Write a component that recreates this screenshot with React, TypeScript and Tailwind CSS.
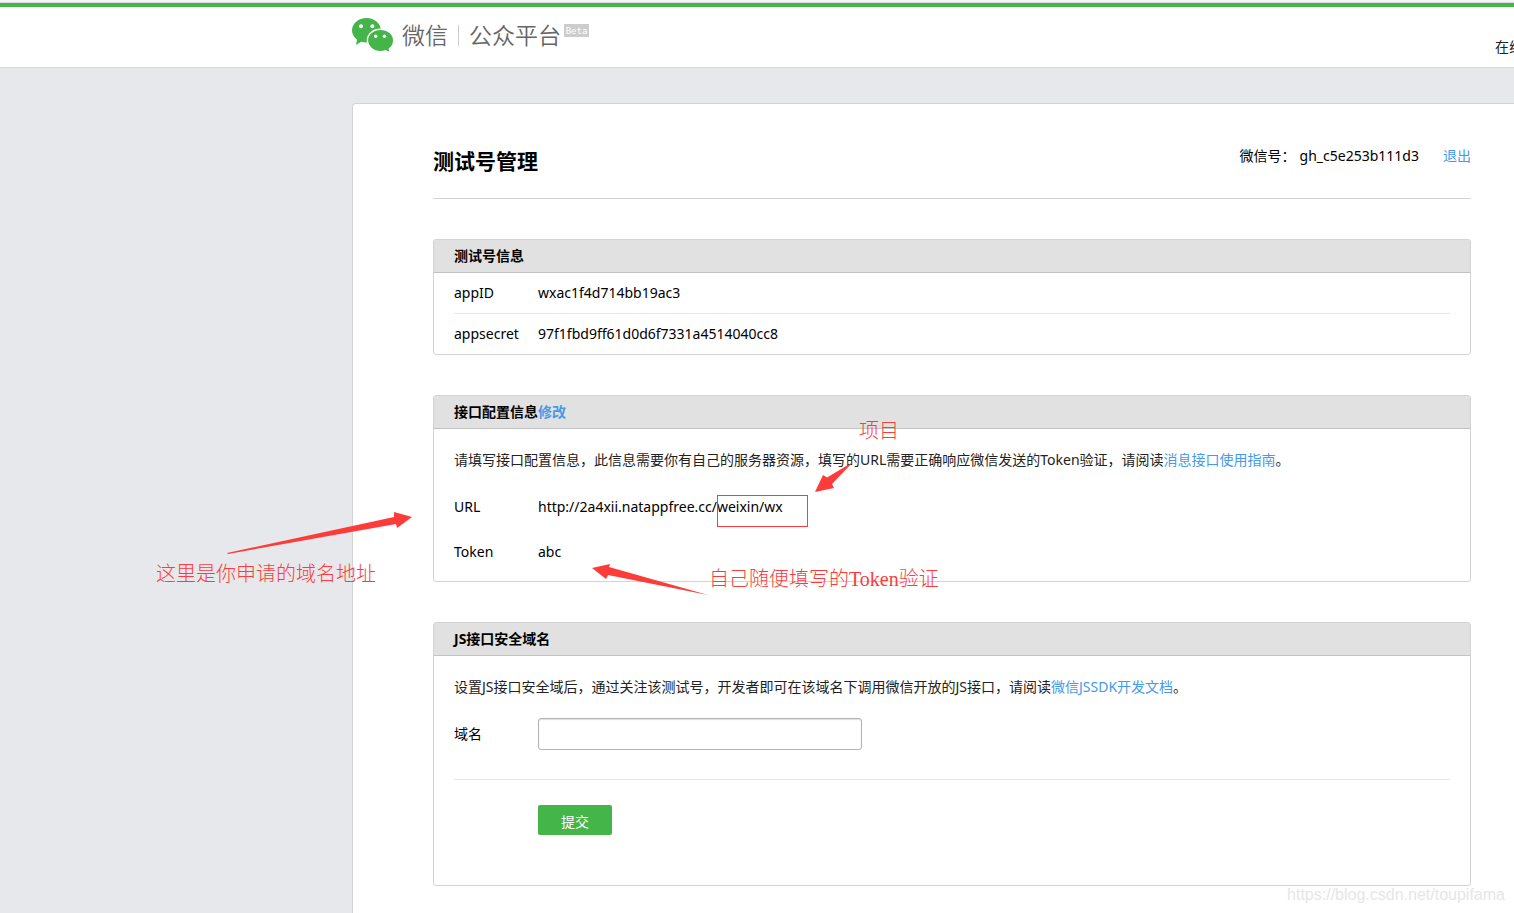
import React, { useState } from "react";

const WechatLogo = () => (
  <svg width="42" height="36" viewBox="0 0 42 36" aria-hidden="true">
    <path
      fill="#44b549"
      d="M14.500 1C6.500 1 0 6.500 0 13.500c0 3.700 2 6.900 5 9.200L4 28l5.200-3.200c1.700 0.500 3.500 0.700 5.300 0.700 8.200 0 14.500-5.500 14.500-12S22.700 1 14.500 1z"
    />
    <path
      fill="#44b549"
      stroke="#fff"
      strokeWidth="1.400"
      d="M28.500 12.300C21.200 12.300 15.400 17 15.400 23.200s5.800 11.400 13.100 11.400c1.800 0 3.400-0.300 5-0.900l5 2.400-1.200-4.300c3-2 4.400-4.900 4.400-8.400C41.700 17 35.900 12.300 28.500 12.300z"
    />
    <circle cx="9" cy="9.300" r="2" fill="#fff" />
    <circle cx="20.400" cy="9.300" r="2" fill="#fff" />
    <circle cx="23.700" cy="19.300" r="1.700" fill="#fff" />
    <circle cx="32.500" cy="19.300" r="1.700" fill="#fff" />
  </svg>
);

const Header = () => (
  <header className="border-b border-[#d9dadc] bg-white">
    <div className="h-[3px] border-b border-[#dcdcdc] bg-[#f5f5f5]" />
    <div className="h-1 bg-[#44b549]" />
    <div className="flex h-[60px] items-start pl-[352px]">
      <a href="#" className="mt-2.5 flex items-start text-[#666]">
        <WechatLogo />
        <span className="ml-2 text-[23px] leading-9 font-[350]">微信</span>
        <span className="mx-2.5 mt-2 h-[21px] w-px bg-[#ccc]" />
        <span className="text-[23px] leading-9 font-[350]">公众平台</span>
        <span className="mt-[7px] ml-[3px] flex h-[13px] w-[25px] items-center justify-center bg-[#ccc] font-['DejaVu_Sans_Mono',monospace] text-[9px] text-white">
          Beta
        </span>
      </a>
      <a href="#" className="mt-[29px] ml-auto w-[19px] whitespace-nowrap text-[#222]">
        在线
      </a>
    </div>
  </header>
);

type PanelProps = {
  title: string;
  action?: React.ReactNode;
  children: React.ReactNode;
};

const Panel = ({ title, action, children }: PanelProps) => (
  <section className="mt-10 rounded-[3px] border border-[#d3d3d3]">
    <h3 className="flex h-[33px] items-center border-b border-[#c3c3c3] bg-[#e1e1e1] px-5 font-bold">
      {title}
      {action}
    </h3>
    <div className="px-5">{children}</div>
  </section>
);

const Row = ({ label, value, className }: { label: string; value: string; className: string }) => (
  <div className={`flex items-center ${className}`}>
    <dt className="w-[84px] shrink-0">{label}</dt>
    <dd>{value}</dd>
  </div>
);

// Red notes drawn over the page
const Notes = () => (
  <div className="pointer-events-none absolute inset-0 font-['Liberation_Serif','Noto_Sans_CJK_SC',serif] text-[20px] leading-6 font-light whitespace-nowrap text-[#fc3c3c]">
    <span className="absolute top-[419px] left-[859px]">项目</span>
    <span className="absolute top-[562px] left-[156px]">这里是你申请的域名地址</span>
    <span className="absolute top-[567px] left-[709px]">自己随便填写的Token验证</span>
    <span className="absolute top-[495px] left-[717px] h-8 w-[91px] border border-[#fc3c3c]" />
    <svg className="absolute top-[512px] left-[227px]" width="186" height="43" fill="#fd3b39">
      <path d="M0 41 L167 5 L167 0 L185 5 L170 16 L169 12 L1 42z" />
    </svg>
    <svg className="absolute top-[462px] left-[814px]" width="40" height="32" fill="#fd3b39">
      <path d="M1 30 L9 13 L13 15.500 L39 0 L18 22 L20 26z" />
    </svg>
    <svg className="absolute top-[563px] left-[592px]" width="118" height="33" fill="#fd3b39">
      <path d="M0 5 L18 1 L17 4 L116 32 L16 12 L14 16z" />
    </svg>
  </div>
);

const App = () => {
  const [domain, setDomain] = useState("");

  return (
    <div className="relative flex min-h-screen flex-col overflow-hidden bg-[#e7e8eb] font-['Noto_Sans','Noto_Sans_CJK_SC',sans-serif] text-[14px] leading-[22px] text-black">
      <Header />

      <main className="mt-[35px] ml-[352px] flex-1 rounded-tl-[4px] border-t border-l border-[#d3d3d3] bg-white pr-[43px] pb-[27px] pl-20">
        <div className="flex h-[95px] items-start justify-between border-b border-[#d3d3d3]">
          <h2 className="mt-[41px] text-[21px] leading-8 font-bold">测试号管理</h2>
          <div className="mt-[41px] flex">
            <span>微信号：</span>
            <span className="ml-1">gh_c5e253b111d3</span>
            <a href="#" className="ml-6 text-[#459ae9]">
              退出
            </a>
          </div>
        </div>

        <Panel title="测试号信息">
          <dl>
            <Row label="appID" value="wxac1f4d714bb19ac3" className="h-10" />
            <Row
              label="appsecret"
              value="97f1fbd9ff61d0d6f7331a4514040cc8"
              className="h-[41px] border-t border-[#e7e7eb]"
            />
          </dl>
        </Panel>

        <Panel
          title="接口配置信息"
          action={
            <a href="#" className="text-[#459ae9]">
              修改
            </a>
          }
        >
          <p className="pt-5 text-[#222]">
            请填写接口配置信息，此信息需要你有自己的服务器资源，填写的URL需要正确响应微信发送的Token验证，请阅读
            <a href="#" className="text-[#459ae9]">
              消息接口使用指南
            </a>
            。
          </p>
          <dl className="pt-[13px] pb-[7px]">
            <Row label="URL" value="http://2a4xii.natappfree.cc/weixin/wx" className="h-[45px]" />
            <Row label="Token" value="abc" className="h-[45px]" />
          </dl>
        </Panel>

        <Panel title="JS接口安全域名">
          <p className="pt-5 text-[#222]">
            设置JS接口安全域后，通过关注该测试号，开发者即可在该域名下调用微信开放的JS接口，请阅读
            <a href="#" className="text-[#459ae9]">
              微信JSSDK开发文档
            </a>
            。
          </p>
          <form className="pt-5 pb-[50px]" onSubmit={(e) => e.preventDefault()}>
            <div className="flex items-center">
              <label htmlFor="domain" className="w-[84px]">
                域名
              </label>
              <input
                id="domain"
                type="text"
                value={domain}
                onChange={(e) => setDomain(e.target.value)}
                className="h-8 w-[324px] rounded-[3px] border border-[#b3b3b3] px-2.5 shadow-[inset_0_1px_1px_#ddd] outline-none"
              />
            </div>
            <div className="mt-[29px] border-t border-[#e7e7eb] pt-[25px] pl-[84px]">
              <button
                type="submit"
                className="block h-[30px] w-[74px] rounded-[2px] bg-[#44b549] pt-1 text-white"
              >
                提交
              </button>
            </div>
          </form>
        </Panel>
      </main>

      <Notes />
      <span className="absolute right-[9px] bottom-2 font-['Liberation_Sans',sans-serif] text-[16px] leading-5 text-[#e6e6e6]">
        https://blog.csdn.net/toupifama
      </span>
    </div>
  );
};

export default App;
